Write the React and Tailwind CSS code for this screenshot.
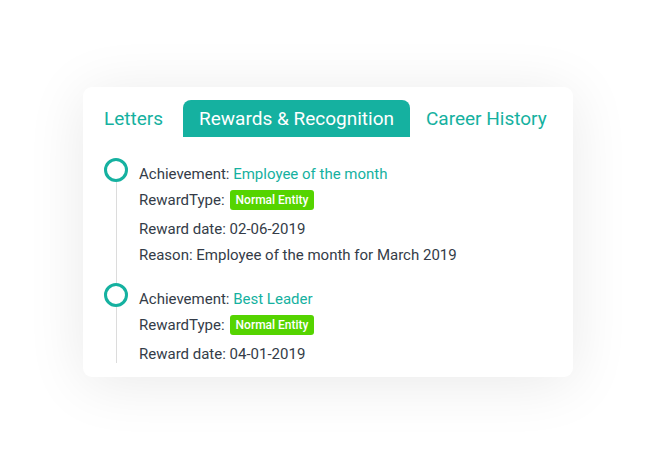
const rewards = [
  {
    achievement: "Employee of the month",
    type: "Normal Entity",
    date: "02-06-2019",
    reason: "Employee of the month for March 2019",
  },
  {
    achievement: "Best Leader",
    type: "Normal Entity",
    date: "04-01-2019",
  },
];

function Row({ children, className = "" }) {
  return <div className={`h-[26px] flex items-center ${className}`}>{children}</div>;
}

function RewardItem({ item, last }) {
  return (
    <div className={`flex ${last ? "" : "pb-[15px]"}`}>
      <div className="w-[24px] flex flex-col items-center shrink-0">
        <div className="w-[24px] h-[24px] rounded-full border-[3px] border-[#15b1a0] shrink-0" />
        <div className={`w-px bg-[#dcdcdc] flex-1 ${last ? "mb-[4px]" : "-mb-[15px]"}`} />
      </div>
      <div className="ml-[11px] pt-[3px] text-[15px] text-[#343c48]">
        <Row>
          Achievement:&nbsp;<span className="text-[#15b1a0]">{item.achievement}</span>
        </Row>
        <Row className="mb-[3px]">
          RewardType:
          <span className="ml-[5px] h-[20px] px-[6px] flex items-center rounded-[3px] bg-[#55d400] text-white text-[12px] font-medium">
            {item.type}
          </span>
        </Row>
        <Row>Reward date: {item.date}</Row>
        {item.reason && <Row>Reason: {item.reason}</Row>}
      </div>
    </div>
  );
}

export default function App() {
  return (
    <div className="w-[670px] h-[470px] bg-white pt-[87px] pl-[83px] font-['Roboto',sans-serif]">
      <div className="w-[490px] h-[290px] bg-white rounded-[9px] shadow-[0_6px_60px_rgba(0,0,0,0.09)] pt-[13px] px-[6px]">
        {/* Tabs */}
        <div className="flex items-end text-[19px] h-[37px]">
          <div className="px-[15px] h-full flex items-center pt-[2px] text-[#15b1a0]">Letters</div>
          <div className="ml-[5px] px-[16px] h-full flex items-center pt-[2px] bg-[#15b1a0] text-white rounded-t-[8px]">
            Rewards &amp; Recognition
          </div>
          <div className="px-[16px] h-full flex items-center pt-[2px] text-[#15b1a0]">Career History</div>
        </div>

        {/* Timeline */}
        <div className="pt-[21px] pl-[15px]">
          {rewards.map((r, i) => (
            <RewardItem key={i} item={r} last={i === rewards.length - 1} />
          ))}
        </div>
      </div>
    </div>
  );
}
